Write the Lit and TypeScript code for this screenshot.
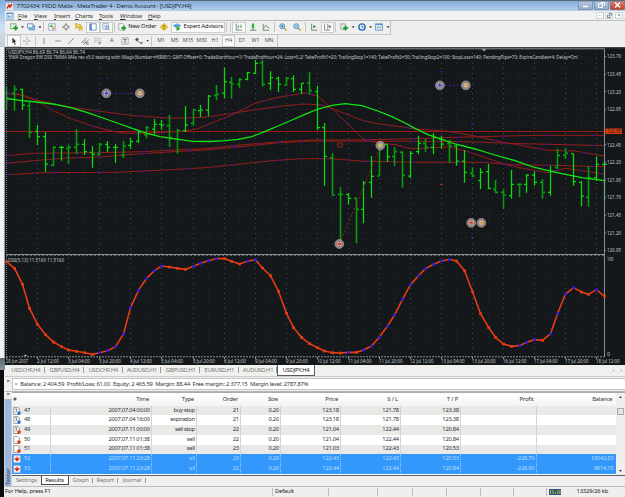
/**
 * Trading terminal window: menus, toolbars, price chart and tester results
 */

import { LitElement, html, svg, css } from 'lit'
import { customElement } from 'lit/decorators.js'
import { classMap } from 'lit/directives/class-map.js'

type Point = [number, number]

const FONT = css`"Noto Sans", "Open Sans", sans-serif`

// Distance between two bars and position of the first one
const BAR_STEP = 7.763
const BAR_START = 6.6
const barX = (i: number) => Math.round(BAR_START + i * BAR_STEP - 0.4)

/** high, low, open, close as offsets in thirds of a pixel */
const BARS = [
  [80, 150, 100, 115], [76, 152, 100, 88], [87, 150, 88, 135], [125, 234, 138, 217],
  [195, 255, 213, 230], [217, 335, 230, 312], [259, 318, 316, 262], [258, 302, 262, 262],
  [254, 312, 265, 262], [207, 281, 262, 253], [238, 285, 253, 275], [258, 323, 277, 283],
  [249, 287, 283, 253], [243, 276, 253, 262], [253, 308, 262, 262], [243, 294, 285, 258],
  [234, 266, 256, 245], [211, 249, 243, 216], [198, 235, 225, 203], [177, 223, 207, 193],
  [180, 209, 193, 195], [165, 261, 197, 233], [207, 281, 237, 211], [138, 216, 212, 195],
  [148, 197, 190, 150], [135, 171, 152, 150], [105, 168, 150, 108], [75, 121, 106, 103],
  [22, 115, 99, 65], [50, 116, 67, 72], [54, 84, 73, 58], [36, 61, 58, 38],
  [0, 41, 40, 10], [0, 80, 8, 73], [34, 90, 70, 53], [50, 96, 55, 73],
  [51, 77, 75, 55], [46, 96, 56, 88], [69, 102, 88, 70], [37, 103, 69, 92],
  [77, 211, 95, 203], [190, 377, 203, 289], [280, 407, 293, 405], [381, 565, 403, 403],
  [400, 434, 403, 415], [415, 550, 415, 448], [363, 489, 448, 368], [288, 413, 367, 349],
  [245, 347, 348, 255], [253, 306, 253, 290], [261, 318, 290, 275], [274, 383, 277, 346],
  [273, 353, 348, 280], [227, 283, 275, 250], [236, 276, 250, 262], [220, 283, 262, 232],
  [227, 266, 238, 252], [239, 308, 250, 258], [254, 317, 258, 303], [270, 368, 303, 337],
  [322, 351, 340, 348], [325, 387, 362, 337], [312, 388, 335, 385], [360, 400, 388, 397],
  [388, 447, 397, 405], [330, 416, 407, 373], [373, 411, 373, 373], [342, 398, 373, 345],
  [334, 377, 345, 367], [358, 416, 367, 397], [318, 407, 397, 333], [266, 327, 322, 286],
  [263, 297, 286, 280], [281, 377, 281, 365], [363, 439, 367, 408], [318, 440, 412, 353],
  [289, 362, 353, 313], [305, 420, 313, 313],
]

/** Oscillator values, one per bar */
const DSS = [
  35, 55, 103, 175, 223, 254, 276, 290, 300, 304, 308, 313, 308, 302, 290, 252, 173, 121, 85, 62,
  48, 51, 55, 58, 49, 40, 32, 26, 26, 34, 42, 34, 29, 54, 77, 124, 190, 233, 262, 281,
  293, 303, 308, 309, 307, 307, 300, 288, 261, 228, 195, 148, 104, 77, 56, 43, 33, 28, 33, 62,
  125, 191, 232, 262, 282, 289, 287, 277, 269, 271, 251, 191, 132, 113, 126, 133, 119, 139,
]

const MA_GREEN: Point[] = [
  [6.7, 98.5], [20, 100.3], [36.7, 102], [53, 104], [70, 107.3], [86.7, 112.3], [103, 118], [120, 124],
  [133, 128.7], [147, 133.3], [160, 136.7], [173, 138.7], [193, 141.3], [210, 141.5], [225, 140.7],
  [238, 139.3], [252, 136.7], [265, 131.3], [278, 126], [292, 120], [305, 114.3], [318, 109], [332, 105.3],
  [345, 103.7], [362, 105.7], [378, 111], [392, 116.7], [405, 123], [415, 128.3], [428, 134.7], [442, 139.3],
  [455, 144], [475, 149], [495, 155], [515, 160.7], [532, 166.7], [548, 170.7], [562, 173.7], [582, 177.7],
  [604, 180.7],
]

const MA_RED: Point[][] = [
  [
    [6.7, 93.7], [20, 94.3], [36.7, 100], [67, 106.7], [100, 111.3], [133, 115.7], [173, 118.3], [205, 117.3],
    [232, 113.3], [258, 109.3], [285, 105.7], [305, 104], [322, 105], [338, 111], [362, 120.3], [378, 123.7],
    [405, 127.3], [415, 129], [448, 131.3], [475, 136], [502, 142], [522, 145.7], [548, 150.3], [575, 151],
    [604, 156],
  ],
  [
    [6.7, 93], [20, 94.7], [36.7, 100.7], [53, 110.7], [73, 119.3], [93, 126.3], [113, 131.3], [127, 133.3],
    [147, 133.3], [180, 131.3], [197, 129], [210, 123.7], [232, 115], [255, 103.3], [278, 97.3], [305, 93],
    [318, 96], [332, 108.7], [352, 128.3], [365, 140.3], [378, 142.7], [395, 144.7], [408, 148], [415, 148.7],
    [448, 146.7], [468, 151.7], [492, 160], [512, 166.3], [548, 172.7], [565, 168.3], [582, 170.7], [604, 174],
  ],
  [
    [6.7, 155.7], [33, 153.3], [100, 152.7], [143, 151.7], [173, 150], [205, 148.7], [248, 144.3], [278, 142],
    [312, 140], [355, 140], [415, 138.7], [465, 137], [538, 135.3], [604, 135.3],
  ],
  [
    [6.7, 163.3], [33, 160.7], [67, 158], [100, 157], [133, 154.3], [173, 151.7], [205, 150], [248, 146],
    [278, 142.7], [312, 141], [415, 141.3], [465, 141.7], [508, 143.3], [548, 144.3], [604, 145.7],
  ],
  [
    [6.7, 174.7], [43, 172.7], [117, 172.3], [160, 170.3], [205, 167.7], [238, 164.3], [272, 160.7],
    [302, 158.7], [332, 158.7], [365, 161.3], [415, 162.3], [482, 162.3], [512, 164.7], [555, 165.3], [604, 166.7],
  ],
]

const PRICES = [
  '123.70', '123.45', '123.20', '122.95', '122.70', '122.45',
  '122.20', '121.95', '121.70', '121.45', '121.20', '120.95',
]

const DATES = [
  '29 Jun 2007', '2 Jul 12:00', '3 Jul 04:00', '3 Jul 20:00', '4 Jul 12:00', '5 Jul 04:00', '5 Jul 20:00',
  '6 Jul 12:00', '9 Jul 04:00', '9 Jul 20:00', '10 Jul 12:00', '11 Jul 04:00', '11 Jul 20:00', '12 Jul 12:00',
  '13 Jul 04:00', '13 Jul 20:00', '16 Jul 12:00', '17 Jul 04:00', '17 Jul 20:00', '18 Jul 12:00',
]

const MARKERS: [number, number, string][] = [
  [106.3, 93.3, 'blue'], [139.8, 93.3, 'gold'],
  [439.9, 85.3, 'blue'], [465.8, 85.3, 'gold'],
  [339.3, 244, 'red'], [380.3, 145.5, 'lime'],
  [471.2, 222.8, 'red'], [481.4, 222.8, 'gold'],
]

const CHART_NOTE =
  "'EWA Dragon EW DSS TMMA MAs rev v5.0 testing with iMagicNumber=HIR801; GMT-Offset=0; TradeStartHour=1/ TradeEndHour=24; Lots=0.2/ TakeProfit1=20; TrailingStop1=140; TakeProfit2=50; TrailingStop2=100; StopLoss=140; PendingPips=70; ExpireCandles=4; Delay=On!"

const ROWS = [
  ['47', '2007.07.04 00:00', 'buy stop', '21', '0.20', '123.18', '121.78', '123.38', '', ''],
  ['48', '2007.07.04 16:00', 'expiration', '21', '0.20', '123.18', '121.78', '123.38', '', ''],
  ['49', '2007.07.11 00:00', 'sell stop', '22', '0.20', '121.04', '122.44', '120.84', '', ''],
  ['50', '2007.07.11 01:38', 'sell', '22', '0.20', '121.04', '122.44', '120.84', '', ''],
  ['51', '2007.07.11 01:38', 'sell', '23', '0.20', '121.03', '122.43', '120.53', '', ''],
  ['52', '2007.07.11 23:28', 's/l', '23', '0.20', '122.43', '122.43', '120.53', '-228.70', '10042.83'],
  ['53', '2007.07.11 23:28', 's/l', '22', '0.20', '122.44', '122.44', '120.84', '-228.60', '9814.15'],
]

const toPoints = (pts: Point[]) => pts.map(p => p.join(',')).join(' ')

/**
 * Price chart with indicator window
 */
@customElement('price-chart')
export class PriceChart extends LitElement {
  static styles = css`
    :host {
      display: block;
      flex: none;
      height: 318px;
    }

    svg {
      display: block;
    }

    text {
      font-family: ${FONT};
      font-size: 5px;
      fill: #c4c8c8;
    }

    .grid {
      stroke: #404c4e;
      stroke-width: 1;
      stroke-dasharray: 1 4;
      stroke-dashoffset: 1;
    }

    .grid.dim {
      stroke: #222e2d;
    }

    .frame {
      stroke: #8b9092;
      stroke-width: 1;
    }

    .bar {
      stroke: #08dc0c;
      stroke-width: 1.25;
      fill: none;
    }

    .bar.shade {
      stroke: #089a10;
      stroke-width: 1.6;
    }

    .ma {
      fill: none;
      stroke: #981c16;
      stroke-width: 1;
    }

    .ma-tint {
      fill: none;
      stroke: #43148a;
      stroke-width: 0.9;
      stroke-dasharray: 5 21 2 17;
    }

    .ma-green {
      fill: none;
      stroke: #12e512;
      stroke-width: 1.3;
    }

    .dss {
      fill: none;
      stroke: #e53c14;
      stroke-width: 1.6;
    }

    .up {
      fill: #2020e8;
    }

    .down {
      fill: #e53c14;
    }

    .link {
      stroke: #3c1fa0;
      stroke-dasharray: 2 2;
    }

    .link.red {
      stroke: #a02020;
      stroke-width: 0.9;
    }

    .disc {
      fill: #8c8080;
      stroke: #a89c98;
      stroke-width: 0.7;
    }

    .blue {
      fill: #3038e8;
    }

    .gold {
      fill: #d8a040;
    }

    .red {
      fill: #e03c1c;
    }

    .lime {
      fill: #a8c828;
    }

    .last-price {
      fill: #3c0c08;
    }
  `

  private _grid() {
    const columns = Array.from({ length: 39 }, (_, i) => i * 2).filter(i => i > 0)
    return svg`
      ${PRICES.map((_, i) => {
        const y = Math.round(56 + i * 17.64 - 0.4) + 0.5
        return svg`<line class="grid dim" x1="7" x2="604" y1=${y} y2=${y}/>`
      })}
      ${columns.map(
        i => svg`<line class="grid ${i % 4 ? 'dim' : ''}" x1=${barX(i) + 0.5} x2=${barX(i) + 0.5} y1="49" y2="357"/>`
      )}
    `
  }

  private _bar([high, low, open, close]: number[], i: number) {
    const x = barX(i) + 0.5
    const y = (v: number) => 60 + v / 3
    const shade = i % 3 === 0 || i % 7 === 1
    const d = `M${x} ${y(high)}V${y(low)}M${x - 2.5} ${y(open)}H${x}M${x} ${y(close)}H${x + 2.5}`
    return svg`<path class="bar ${shade ? 'shade' : ''}" d=${d}/>`
  }

  private _marker([x, y, color]: [number, number, string]) {
    return svg`
      <circle class="disc" cx=${x} cy=${y} r="4.4"/>
      <circle fill="#d4c8bc" cx=${x} cy=${y} r="2.3"/>
      <path class=${color} d="M${x - 2} ${y}L${x + 0.4} ${y - 2.5}V${y - 0.9}H${x + 1.8}V${y + 0.9}H${x + 0.4}V${y + 2.5}Z"/>
    `
  }

  render() {
    const dss: Point[] = DSS.map((v, i) => [barX(i) + 0.5, 250 + v / 3])
    return html`
      <svg width="620" height="318" viewBox="5 47 620 318">
        <rect x="5" y="47" width="620" height="318" fill="#14181b" />
        ${this._grid()}
        ${MA_RED.map(
          line => svg`
            <polyline class="ma" points=${toPoints(line)}/>
            <polyline class="ma-tint" points=${toPoints(line)}/>
          `
        )}
        <line class="ma" x1="6" x2="604" y1="131.5" y2="131.5" />
        ${BARS.map((bar, i) => this._bar(bar, i))}
        <polyline class="ma-green" points=${toPoints(MA_GREEN)} />

        <line class="link" x1="111" x2="136" y1="93.5" y2="93.5" />
        <line class="link" x1="445" x2="462" y1="85.5" y2="85.5" />
        <line class="link red" x1="340" x2="380" y1="243" y2="147" />
        <path d="M106 78.5h3M106 192h3M440 71.5h3M471 124h3M471 237.5h3" stroke="#35189a" />
        <path d="M440 184.5h3" stroke="#a03818" />
        <rect x="338" y="143" width="4.5" height="4" fill="none" stroke="#981c16" />
        ${MARKERS.map(m => this._marker(m))}

        <rect x="5" y="47" width="620" height="1.4" fill="#3e4244" />
        <path class="frame" d="M6 48.8H604.5V357M6 254.5H604.5" fill="none" />
        <path d="M6 255.5H604" stroke="#606466" stroke-dasharray="2 2" />
        <path d="M6.5 48V357" stroke="#777c80" stroke-dasharray="1 1" />
        <path d="M6 356.8H604" stroke="#8b9092" stroke-dasharray="2 1" />
        <path d="M481.5 49h5l-2.5 2.4zM23.5 356h4l-2-1.8z" fill="#8fa0ac" />

        <text x="8" y="54" textLength="77" lengthAdjust="spacingAndGlyphs">USDJPY,H4  86.69 86.74 86.64 86.74</text>
        <text x="8" y="59.4" textLength="570" lengthAdjust="spacingAndGlyphs">${CHART_NOTE}</text>
        <text x="8" y="262.2" textLength="56" lengthAdjust="spacingAndGlyphs">DSS(5,13) 11.5160 11.5160</text>

        ${PRICES.map((p, i) => {
          const y = 56 + i * 17.64
          // the last-price tag takes the place of this label
          if (i === 4) return ''
          return svg`
            <path class="frame" d="M604 ${y + 0.5}h2"/>
            <text x="607" y=${y + 2.3} textLength="14" lengthAdjust="spacingAndGlyphs">${p}</text>
          `
        })}
        <rect x="605.5" y="128.5" width="16.5" height="5.5" fill="#d84010" />
        <text class="last-price" x="607" y="133.2" textLength="14" lengthAdjust="spacingAndGlyphs">122.65</text>
        <text x="607" y="260.5" textLength="6.5" lengthAdjust="spacingAndGlyphs">100</text>
        <text x="607" y="355.8">0</text>

        <polyline class="dss" points=${toPoints(dss)} />
        ${dss.map(([x, y], i) => {
          const rising = i > 0 && DSS[i] < DSS[i - 1]
          return svg`<rect class=${rising ? 'up' : 'down'} x=${x - 1.3} y=${y - 1.3} width="2.7" height="2.7"/>`
        })}

        ${DATES.map((d, i) => {
          const x = i ? barX(i * 4) : 6
          return svg`
            <path class="frame" d="M${x + 0.5} 357v2"/>
            <text x=${x} y="363.4" textLength=${d.length > 11 ? 23.5 : 22} lengthAdjust="spacingAndGlyphs">${d}</text>
          `
        })}
      </svg>
    `
  }
}

/** Toolbar glyphs on a 10 x 10 grid */
const PLUS = svg`<path d="M7 3.5v6M4 6.5h6" stroke="#18a028" stroke-width="2.2"/>`
const ICONS: Record<string, unknown> = {
  newChart: svg`<path d="M.5 1h7v6h-7z" fill="#e4eee4" stroke="#70a078"/>${PLUS}`,
  profiles: svg`<path d="M2.5 3.5h7v5h-7z" fill="#9cc4ec" stroke="#4c84bc"/><path d="M.5 1h7v5h-7z" fill="#e8f2fc" stroke="#4c84bc"/>`,
  market: svg`<path d="M1 1h8v8h-8z" fill="#fff" stroke="#68a0cc"/><path d="M2 5l2-3 2 3z" fill="#28a838"/><path d="M4 5.5h4.500l-2 3z" fill="#e07020"/><path d="M5 2l3 3" stroke="#e8b820"/>`,
  target: svg`<circle cx="5" cy="5" r="2.8" fill="none" stroke="#777"/><path d="M5 0v3.5M5 6.5V10M0 5h3.5M6.5 5H10" stroke="#777"/>`,
  folder: svg`<path d="M0 1h3.500l1 1H7v4H0z" fill="#f0d060" stroke="#b89028" stroke-width=".7"/><path d="M7 3l1 2 2 .2-1.6 1.4L9 9.500 7 8 4.800 9.500l.7-2.900L4 5.200l2-.2z" fill="#f4c828" stroke="#b89028" stroke-width=".5"/>`,
  navigator: svg`<path d="M1 1h8v8h-8z" fill="#fff" stroke="#5890c8"/><path d="M1 1h2.500v8H1z" fill="#5088cc"/>`,
  tester: svg`<path d="M1 .8h7v7h-7z" fill="#fff" stroke="#8aa4c0"/><path d="M2 3h5M2 5h4" stroke="#7898c0" stroke-width=".7"/><circle cx="6.500" cy="6" r="2" fill="#bcdcf4" stroke="#4878b0" stroke-width=".8"/><path d="M8 7.500l2 2" stroke="#c89020" stroke-width="1.200"/>`,
  order: svg`<path d="M1 .8h5l2 2v6h-7z" fill="#fff" stroke="#888" stroke-width=".8"/>${PLUS}`,
  diamond: svg`<path d="M5 .5L9.500 5 5 9.500.5 5z" fill="#f0c828" stroke="#b08c18" stroke-width=".8"/><path d="M5 2.500v3M5 6.500v1" stroke="#5c4808"/>`,
  expert: svg`<ellipse cx="5" cy="3.500" rx="4.600" ry="1.800" fill="#4898d8"/><path d="M2.500 3c0-3 5-3 5 0z" fill="#68b0e8"/><path d="M3 5h4v3H3z" fill="#e8c468"/><path d="M4.500 4.500l5 2.800-5 2.700z" fill="#20a830"/>`,
  bars: svg`<path d="M1.500 1v8H9" fill="none" stroke="#666"/><path d="M4 3v4M4 4h1.500M7.500 2v4M6.500 5h1" stroke="#28a030"/>`,
  candle: svg`<path d="M1 9h8" stroke="#666"/><path d="M5 0v9" stroke="#188828"/><path d="M3.500 1.500h3v5h-3z" fill="#28b838"/>`,
  line: svg`<path d="M1.500 1v8H9" fill="none" stroke="#666"/><path d="M2.500 6Q4.500 1 6 4T9 6" fill="none" stroke="#28a030"/>`,
  zoomIn: svg`<path d="M6 6l3.500 3.500" stroke="#c8a030" stroke-width="1.800"/><circle cx="4" cy="4" r="3" fill="#d8ecfa" stroke="#4084c0" stroke-width="1.200"/><path d="M2.500 4h3M4 2.500v3" stroke="#2060a8"/>`,
  zoomOut: svg`<path d="M6 6l3.500 3.500" stroke="#c8a030" stroke-width="1.800"/><circle cx="4" cy="4" r="3" fill="#d8ecfa" stroke="#4084c0" stroke-width="1.200"/><path d="M2.500 4h3" stroke="#2060a8"/>`,
  scroll: svg`<path d="M2 1v8H9" fill="none" stroke="#666"/><path d="M4 2.500l4 2-4 2z" fill="#28a030"/>`,
  shift: svg`<path d="M2 1v8H9" fill="none" stroke="#777"/><path d="M6 1v7" stroke="#4070a8"/><path d="M9.500 2.500v4l-3-2z" fill="#c04028"/>`,
  indicator: svg`<path d="M1 1h5.500v7H1z" fill="#dcebdc" stroke="#78907c" stroke-width=".8"/>${PLUS}`,
  clock: svg`<circle cx="5" cy="5" r="4.800" fill="#2870c8"/><circle cx="5" cy="5" r="3" fill="#e8f4ff"/><path d="M5 3v2.200h2" fill="none" stroke="#345"/>`,
  template: svg`<path d="M.5 1h9v8h-9z" fill="#e4f0fa" stroke="#5888b8"/><path d="M1 2h8" stroke="#5c98d4" stroke-width="1.600"/><path d="M2 6l2-1 2 1.500 2-2" fill="none" stroke="#409050"/>`,
  cursor: svg`<path d="M3 .5l5 5.500H5.700l1.500 3-1.200.6-1.500-3.100L3 8z" fill="#333"/>`,
  cross: svg`<path d="M5 0v4M5 6v4M0 5h4M6 5h4" stroke="#999"/>`,
  vline: svg`<path d="M5 1v8" stroke="#777"/>`,
  hline: svg`<path d="M1.500 5h7" stroke="#777"/>`,
  trend: svg`<path d="M1.500 8.500l7-7" stroke="#777"/>`,
  channel: svg`<path d="M0 7.500L7 1M3 9.500L10 3M2 6l3 2M4 4l3 2" stroke="#777" stroke-width=".9"/><path d="M6.500 7h3M6.500 9h3M6.500 7v2" stroke="#555" stroke-width=".8"/>`,
  fibo: svg`<path d="M0 1.500h9M0 4h9M0 6.500h5" stroke="#888" stroke-width=".9" stroke-dasharray="1 .7"/><path d="M6.500 9.500V6.500h3M6.500 8h2" fill="none" stroke="#666" stroke-width=".8"/>`,
  label: svg`<path d="M1 1h8v8H1z" fill="none" stroke="#777" stroke-dasharray="1 .6"/><path d="M3 3h4M5 3v5" stroke="#555"/>`,
  arrows: svg`<path d="M0 3l2.500-2.500L5 3 2.500 5.500zM6 6.500h4l-2 3z" fill="#555"/><path d="M3 5l3 2" stroke="#666"/>`,
}

const icon = (name: string) => html`<svg class="icon" viewBox="0 0 10 10">${ICONS[name]}</svg>`

/**
 * Main window
 */
@customElement('app-root')
export class AppRoot extends LitElement {
  static styles = css`
    :host {
      display: flex;
      width: 625px;
      height: 497px;
      overflow: hidden;
      background: #efefef;
      color: #333;
      font-family: ${FONT};
      font-size: 5.8px;
      line-height: 1;
      white-space: nowrap;
    }

    .edge {
      flex: none;
      width: 5px;
      display: flex;
      flex-direction: column;
      background: #f0f2f4;
    }

    .edge-top {
      height: 47px;
      background: linear-gradient(#7fb0e0, #cfe2f4 60%, #c8ccd0);
    }

    .edge-mid {
      flex: 1;
      border-right: 1px solid #8da0a8;
    }

    .edge-dark {
      height: 12px;
      background: linear-gradient(#5c6468, #8496a2);
    }

    .edge-end {
      height: 127px;
      margin-right: 1px;
      background: #0c0c0c;
    }

    .window {
      flex: 1;
      min-width: 0;
      display: flex;
      flex-direction: column;
    }

    .title {
      flex: none;
      height: 11px;
      box-sizing: border-box;
      border-top: 1px solid #5f6972;
      display: flex;
      align-items: center;
      background: linear-gradient(#86add8, #b4cdea);
      color: #1e2c40;
      font-size: 6px;
    }

    .logo {
      width: 7px;
      height: 7px;
      margin: 0 4px 0 0.5px;
    }

    .title-text {
      flex: 1;
      letter-spacing: -0.21px;
    }

    .win-buttons {
      display: flex;
      gap: 1px;
      align-self: flex-start;
    }

    .win-button {
      width: 15px;
      height: 8.5px;
      display: flex;
      align-items: center;
      justify-content: center;
      background: linear-gradient(#b4c8e0, #8fa8c4);
      box-shadow: inset 0 0 0 0.6px #6c84a0;
      border-radius: 0 0 2px 2px;
    }

    .win-button.close {
      background: linear-gradient(#d88474, #c03c20);
    }

    .menu {
      flex: none;
      height: 10px;
      box-sizing: border-box;
      display: flex;
      align-items: center;
      padding: 0 2px 0 1px;
      border-bottom: 1px solid #b8bcba;
      background: #f1f1f1;
      font-size: 6px;
    }

    .menu-items {
      flex: 1;
      display: grid;
      grid-template-columns: 16px 20px 21px 24px 21px 28px 20px;
      margin-left: 4px;
      letter-spacing: -0.1px;
    }

    .mdi {
      width: 8px;
      height: 7.5px;
      margin-left: 1.6px;
      box-sizing: border-box;
      border: 1px solid #ccd4da;
      background: #f8fafc;
      color: #4c6880;
      display: flex;
      align-items: center;
      justify-content: center;
      line-height: 5px;
    }

    .toolbar {
      flex: none;
      display: flex;
      align-items: center;
      box-sizing: border-box;
      height: 13.5px;
      padding-left: 2px;
      border-bottom: 1px solid #c9c9c6;
    }

    .toolbar.first {
      width: 386px;
      border-right: 1px solid #c4c4c4;
    }

    .toolbar.second {
      height: 12.5px;
      width: 273px;
      border-bottom: none;
      border-right: 1px solid #c4c4c4;
    }

    .icon {
      display: block;
      flex: none;
      width: 8px;
      height: 8px;
    }

    .tool {
      flex: none;
      width: 13.5px;
      height: 11.5px;
      display: flex;
      align-items: center;
      justify-content: center;
      color: #555;
      font-size: 5.4px;
    }

    .pressed {
      box-shadow: inset 0 0 0 0.8px #c0c0be;
      background: #fafafa;
    }

    .drop {
      flex: none;
      width: 4px;
      height: 2px;
      background: #333;
      clip-path: polygon(15% 0, 85% 0, 50% 100%);
    }

    .sep {
      flex: none;
      width: 1px;
      height: 10px;
      margin: 0 1.3px;
      background: #c6c6c4;
    }

    .tool.wide {
      gap: 2px;
      width: 41px;
      color: #222;
      font-size: 5.8px;
      letter-spacing: -0.18px;
    }

    .tool.expert {
      width: 54px;
    }

    .periods {
      display: flex;
      margin-left: 1px;
      letter-spacing: -0.2px;
    }

    .chart-tabs {
      flex: none;
      height: 12px;
      display: flex;
      align-items: flex-start;
      padding-left: 1.5px;
      border-bottom: 1px solid #cdcdca;
      box-sizing: border-box;
      color: #777;
      background: #f0f0ee;
    }

    .chart-tab {
      box-sizing: border-box;
      width: 38.7px;
      height: 10.5px;
      line-height: 11px;
      text-align: center;
      letter-spacing: -0.25px;
      background: linear-gradient(#999, #999) right 55% / 1px 6px no-repeat;
    }

    .chart-tab.active {
      width: 37.5px;
      border: 1px solid #555b60;
      border-top: none;
      background: #fff;
      color: #222;
    }

    .scroll-arrows {
      display: flex;
      gap: 6px;
      margin-left: auto;
      padding-right: 3px;
      line-height: 10px;
    }

    .balance {
      flex: none;
      height: 15px;
      box-sizing: border-box;
      display: flex;
      padding: 1px 0 1px;
      border-bottom: 1px solid #b4b4b2;
    }

    .grip {
      width: 6.5px;
      flex: none;
      padding-top: 1px;
      text-align: center;
      color: #222;
    }

    .balance-text {
      flex: 1;
      height: 11.5px;
      box-sizing: border-box;
      border: 1px solid #c4c4c4;
      border-right: none;
      background: #fff;
      line-height: 10px;
      padding-left: 2px;
      font-size: 5.8px;
      letter-spacing: -0.2px;
      white-space: pre;
    }

    .dot {
      color: #777;
    }

    .tester {
      flex: none;
      height: 94px;
      display: flex;
    }

    .side {
      width: 6.5px;
      flex: none;
      display: flex;
      flex-direction: column;
    }

    .side-close {
      height: 7px;
      text-align: center;
      color: #222;
    }

    .side-bar {
      flex: 1;
      background: #9db8d8;
      color: #1c2c44;
      writing-mode: vertical-rl;
      transform: rotate(180deg);
      line-height: 6px;
      padding-top: 1px;
      box-sizing: border-box;
    }

    .panel {
      flex: 1;
      min-width: 0;
    }

    .results {
      display: flex;
      height: 83.5px;
      box-sizing: border-box;
      border-bottom: 1px solid #5c6064;
      border-top: 1px solid #aaa;
      background: #fff;
    }

    .table {
      flex: 1;
    }

    .row {
      display: grid;
      grid-template-columns: 39.5px 101px 45px 44px 40px 60px 60px 60px 75.5px 79px;
      height: 9.7px;
      box-sizing: border-box;
      background: #fff;
    }

    .row.alt {
      background: #e9e9e8;
    }

    .row.selected {
      background: #3398fb;
      color: #b8dcfc;
    }

    .row.head {
      height: 12.8px;
      background: linear-gradient(#fff, #f3f3f3);
      color: #333;
    }

    .cell {
      display: flex;
      align-items: center;
      justify-content: flex-end;
      padding-right: 1.3px;
      border-right: 1px solid #d4d4d4;
      letter-spacing: -0.3px;
    }

    .selected .cell {
      border-right: 1px dotted #8cc4f8;
    }

    .head .cell {
      border-right-color: transparent;
      padding-right: 2px;
      letter-spacing: -0.15px;
    }

    .cell:first-child {
      justify-content: flex-start;
      gap: 3px;
      padding: 0 0 0 1.5px;
    }

    .cell:last-child {
      border-right-color: transparent;
    }

    .scrollbar {
      width: 9px;
      display: flex;
      flex-direction: column;
      align-items: center;
      justify-content: space-between;
      padding: 3px 0;
      box-sizing: border-box;
      background: #efefef;
    }

    .arrow {
      width: 3px;
      height: 2px;
      background: #444;
      clip-path: polygon(50% 0, 100% 100%, 0 100%);
    }

    .arrow.down {
      transform: rotate(180deg);
    }

    .thumb {
      width: 7px;
      height: 7px;
      margin: 10px 0 auto;
      box-sizing: border-box;
      border: 1px solid #aaa;
      background: #e4e4e4;
    }

    .tabs {
      display: flex;
      height: 10.5px;
      padding-left: 1px;
      color: #777;
      line-height: 9px;
    }

    .tab {
      box-sizing: border-box;
      height: 9px;
      text-align: center;
      width: 28px;
      letter-spacing: -0.15px;
      background: linear-gradient(#999, #999) right 50% / 1px 5px no-repeat;
    }

    .tab.settings {
      background: none;
    }

    .tab.graph {
      width: 24px;
    }

    .tab.report {
      width: 25.5px;
    }

    .tab.active {
      border: 1px solid #444a50;
      border-top: none;
      background: #fff;
      color: #222;
    }

    .status {
      flex: 1;
      box-sizing: border-box;
      border-top: 1px solid #bcbcba;
      display: grid;
      grid-template-columns: 267.5px 56.5px 49px 34.5px 34px 34px 33.5px 32.5px 1fr;
      align-items: center;
      color: #222;
      letter-spacing: -0.17px;
    }

    .status-cell {
      height: 8px;
      display: flex;
      align-items: center;
      border-right: 1px solid #bdbdbb;
      padding-left: 2.5px;
    }

    .status-cell.help {
      padding-left: 0;
    }

    .status-cell.traffic {
      border: none;
      padding-left: 2px;
      gap: 16px;
    }
  `

  private _tool(name: string, pressed = false) {
    return html`<div class=${classMap({ tool: true, pressed })}>${icon(name)}</div>`
  }

  private _period(name: string) {
    return html`<div class=${classMap({ tool: true, pressed: name === 'H4' })}>${name}</div>`
  }

  private _rowIcon(i: number) {
    if (i > 4) {
      return html`<svg class="icon" viewBox="0 0 10 10">
        <path d="M1 .5h8v9H1z" fill="#fbe9e4" stroke="#c8b8b4" stroke-width=".6" />
        <path d="M5 2v5M2.5 4.5h5L5 7.500z" fill="#d83018" stroke="#d83018" stroke-width="1.2" />
      </svg>`
    }
    const color = i < 2 ? '#2878c8' : '#d8401c'
    return html`<svg class="icon" viewBox="0 0 10 10">
      <path d="M1 .5h5l2 2v7H1z" fill="#fff" stroke="#666" stroke-width=".8" />
      <path d=${i < 3 ? 'M2.5 2.5h2.5L3.5 7' : ''} fill="none" stroke="#555" stroke-width=".9" />
      <circle cx="7.5" cy="7.5" r="2.3" fill=${color} />
    </svg>`
  }

  private _row(row: string[], i: number) {
    const classes = { row: true, alt: i % 2 === 0, selected: i > 4 }
    return html`<div class=${classMap(classes)}>${row.map(
      (value, n) => html`<div class="cell">${n === 0 ? this._rowIcon(i) : ''}<span>${value}</span></div>`
    )}</div>`
  }

  render() {
    const head = ['#', 'Time', 'Type', 'Order', 'Size', 'Price', 'S / L', 'T / P', 'Profit', 'Balance']
    const symbols = ['USDCHF,H4', 'GBPUSD,H4', 'USDCHF,H4', 'AUDUSD,H1', 'GBPUSD,H1', 'EURUSD,H1', 'AUDUSD,H1', 'USDJPY,H4']
    const drop = html`<div class="drop"></div>`
    const sep = html`<div class="sep"></div>`

    return html`
      <div class="edge"><div class="edge-top"></div><div class="edge-mid"></div><div class="edge-dark"></div><div class="edge-end"></div></div>
      <div class="window">
        <div class="title">
          <svg class="logo" viewBox="0 0 7 7"><path d="M0 0h7v7H0z" fill="#f0e4e0" /><path d="M1 5.5L3 2l1 2 2-3" stroke="#c82818" stroke-width="1.5" fill="none" /></svg>
          <div class="title-text">7702434: FXDD Malta - MetaTrader 4 - Demo Account - [USDJPY,H4]</div>
          <div class="win-buttons">
            <div class="win-button"><svg width="7" height="5"><path d="M1 3.5h5" stroke="#fff" stroke-width="1.5" /></svg></div>
            <div class="win-button"><svg width="7" height="6"><path d="M2.5.5h4v3M.5 2h4v3.5h-4z" fill="none" stroke="#fff" /></svg></div>
            <div class="win-button close"><svg width="7" height="6"><path d="M1 .5l5 5M6 .5l-5 5" stroke="#fff" stroke-width="1.4" /></svg></div>
          </div>
        </div>

        <div class="menu">
          <svg class="icon" viewBox="0 0 10 10"><path d="M1 1h8v8H1z" fill="#e4f2fc" stroke="#609cd0" /><path d="M1 2h8M3 7V4M5 8V5M7 6V4" stroke="#3c80c0" /></svg>
          <div class="menu-items">${['File', 'View', 'Insert', 'Charts', 'Tools', 'Window', 'Help'].map(
            m => html`<span><u>${m[0]}</u>${m.slice(1)}</span>`
          )}</div>
          <div class="mdi">-</div>
          <div class="mdi"><svg width="5" height="5"><path d="M2 .5h2.5v2M.5 2h2.5v2.5H.5z" fill="none" stroke="#4c6880" stroke-width=".8" /></svg></div>
          <div class="mdi">×</div>
        </div>

        <div class="toolbar first">
          ${this._tool('newChart')}${drop}${this._tool('profiles')}${drop}${sep}
          ${['market', 'target', 'folder'].map(n => this._tool(n))}
          ${this._tool('navigator', true)}${this._tool('tester', true)}${sep}
          <div class="tool wide">${icon('order')}<span>New Order</span></div>
          ${this._tool('diamond')}
          <div class="tool wide expert pressed">${icon('expert')}<span>Expert Advisors</span></div>
          ${sep}${sep}
          ${this._tool('bars', true)}${this._tool('candle')}${this._tool('line')}${sep}
          ${this._tool('zoomIn')}${this._tool('zoomOut')}${sep}
          ${this._tool('scroll')}${this._tool('shift', true)}${sep}
          ${['indicator', 'clock', 'template'].map(n => html`${this._tool(n)}${drop}`)}
        </div>
        <div class="toolbar second">
          ${this._tool('cursor', true)}${this._tool('cross')}${sep}
          ${['vline', 'hline', 'trend', 'channel', 'fibo'].map(n => this._tool(n))}
          <div class="tool">A</div>
          ${this._tool('label')}${this._tool('arrows')}${drop}${sep}
          <div class="periods">
            ${['M1', 'M5', 'M15', 'M30', 'H1', 'H4', 'D1', 'W1', 'MN'].map(p => this._period(p))}
          </div>
        </div>

        <price-chart></price-chart>

        <div class="chart-tabs">
          ${symbols.map((s, i) => html`<div class=${classMap({ 'chart-tab': true, active: i === 7 })}>${s}</div>`)}
          <div class="scroll-arrows"><span>‹</span><span>›</span></div>
        </div>

        <div class="balance">
          <div class="grip">×</div>
          <div class="balance-text"><span class="dot">¤</span>  Balance: 2 404.59  Profit/Loss: 61.00  Equity: 2 465.59  Margin: 88.44  Free margin: 2 377.15  Margin level: 2787.87%</div>
        </div>

        <div class="tester">
          <div class="side"><div class="side-close">×</div><div class="side-bar">Tester</div></div>
          <div class="panel">
            <div class="results">
              <div class="table">
                <div class="row head">${head.map(h => html`<div class="cell">${h}</div>`)}</div>
                ${ROWS.map((r, i) => this._row(r, i))}
              </div>
              <div class="scrollbar"><div class="arrow"></div><div class="thumb"></div><div class="arrow down"></div></div>
            </div>
            <div class="tabs">
              <div class="tab settings">Settings</div>
              <div class="tab active">Results</div>
              <div class="tab graph">Graph</div>
              <div class="tab report">Report</div>
              <div class="tab">Journal</div>
            </div>
          </div>
        </div>

        <div class="status">
          <div class="status-cell help">For Help, press F1</div>
          <div class="status-cell">Default</div>
          ${[0, 1, 2, 3, 4, 5].map(() => html`<div class="status-cell"></div>`)}
          <div class="status-cell traffic">
            <svg width="12" height="6"><path d="M0 0h12v6H0z" fill="#34507c" /><path d="M1.5 1v4M4 1v4M6.5 3v2M9 1v4M11 1v4" stroke="#9cc838" /></svg>
            <span>13329/26 kb</span>
          </div>
        </div>
      </div>
    `
  }
}

declare global {
  interface HTMLElementTagNameMap {
    'app-root': AppRoot
    'price-chart': PriceChart
  }
}
